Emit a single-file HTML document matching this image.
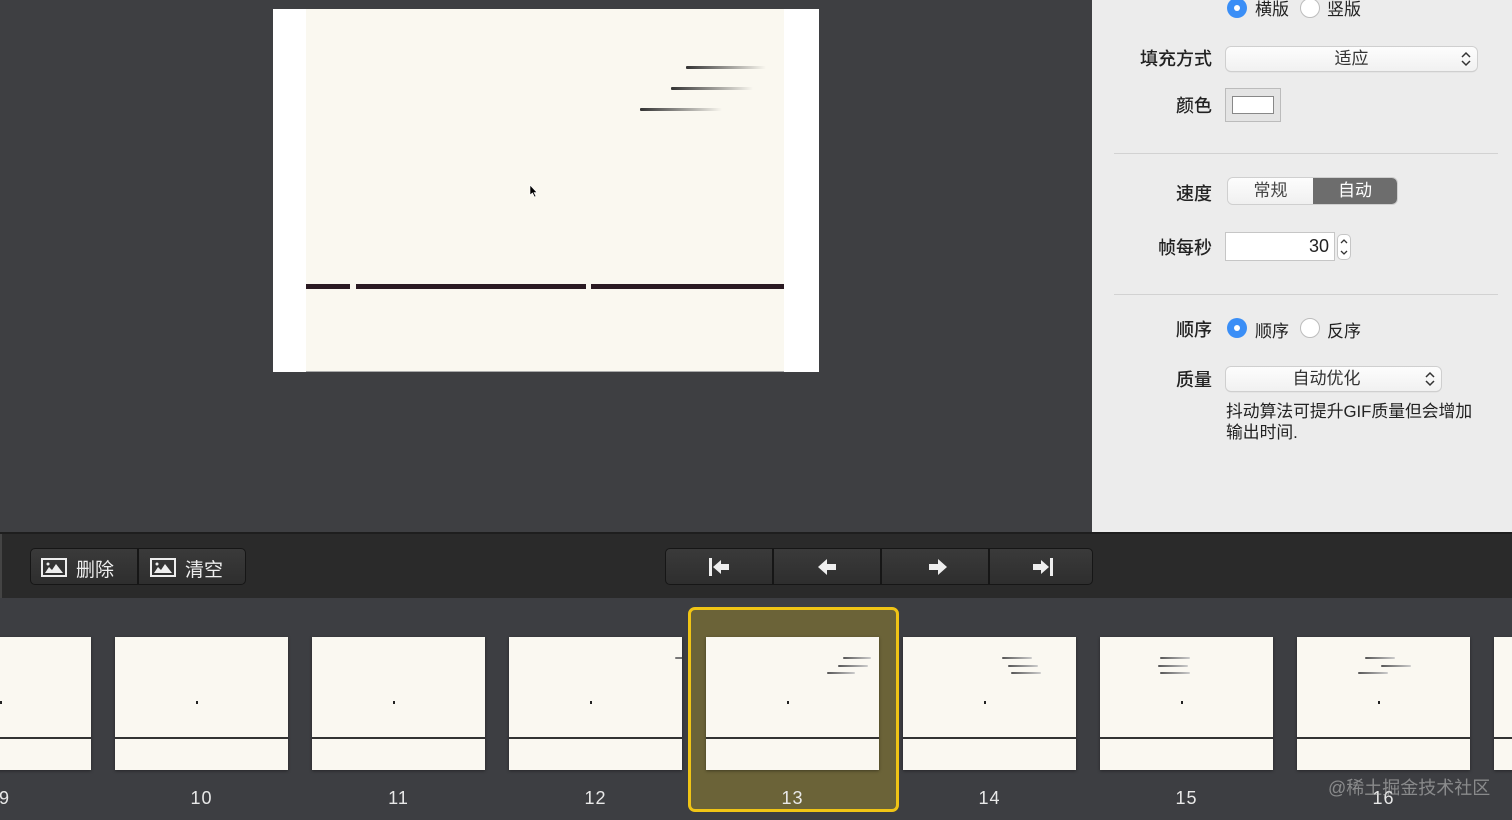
<!DOCTYPE html>
<html><head><meta charset="utf-8"><style>
*{margin:0;padding:0;box-sizing:border-box}
body{width:1512px;height:820px;overflow:hidden;background:#3e3f42;position:relative;font-family:"Liberation Sans","Noto Sans CJK SC",sans-serif}
.a{position:absolute}
.lbl{position:absolute;font-size:18px;color:#222;text-align:right;width:120px;font-weight:500}
.sp{position:absolute;height:2px;border-radius:1px}
.th{position:absolute;top:637px;width:173px;height:133px;background:#faf8f1;box-shadow:0 1px 3px rgba(0,0,0,.4);overflow:hidden}
.th .ln{position:absolute;left:0;right:0;top:100px;height:2px;background:#333}
.th .cur{position:absolute;width:2px;height:3px;background:#222}
.num{position:absolute;top:788px;width:173px;text-align:center;color:#e8e8e8;font-size:18px;letter-spacing:1px}
.btn{position:absolute;top:548px;height:37px;background:linear-gradient(#3a3a3a,#2e2e2e);border:1px solid #161616;color:#eee;font-size:19px}
.pop{position:absolute;background:linear-gradient(#fdfdfd,#f1f1f1);border-radius:5px;box-shadow:0 0 0 1px #cfcfcf,0 1px 1px #bbb;font-size:17px;color:#333;text-align:center}
.radio{position:absolute;width:20px;height:20px;border-radius:50%}
.rb{background:#3a8ef6}.rb:after{content:"";position:absolute;left:7px;top:7px;width:6px;height:6px;border-radius:50%;background:#fff}
.rw{background:#fff;border:1px solid #bdbdbd}
.rt{position:absolute;font-size:17px;color:#222}
</style></head><body>
<!-- preview -->
<div class="a" style="left:273px;top:9px;width:546px;height:363px;background:#fff"></div>
<div class="a" style="left:306px;top:9px;width:478px;height:363px;background:#faf8f0;border-bottom:1px solid #aaa"></div>
<div class="sp" style="left:686px;top:66px;width:80px;height:3px;background:linear-gradient(90deg,#333,rgba(50,50,50,0))"></div>
<div class="sp" style="left:671px;top:87px;width:82px;height:3px;background:linear-gradient(90deg,#333,rgba(50,50,50,0))"></div>
<div class="sp" style="left:640px;top:108px;width:82px;height:3px;background:linear-gradient(90deg,#333,rgba(50,50,50,0))"></div>
<div class="a" style="left:306px;top:284px;width:44px;height:5px;background:#2a1a22"></div>
<div class="a" style="left:356px;top:284px;width:230px;height:5px;background:#2a1a22"></div>
<div class="a" style="left:591px;top:284px;width:193px;height:5px;background:#2a1a22"></div>
<svg class="a" style="left:529px;top:184px" width="10" height="16"><path d="M1 1L1 11L3.5 9L5.5 13L7 12.3L5 8.5L8 8.5Z" fill="#000" stroke="#fff" stroke-width=".6"/></svg>

<!-- right panel -->
<div class="a" style="left:1092px;top:0;width:420px;height:532px;background:#ececec"></div>
<div class="radio rb" style="left:1227px;top:-2px"></div><div class="rt" style="left:1255px;top:-5px">横版</div>
<div class="radio rw" style="left:1300px;top:-2px"></div><div class="rt" style="left:1327px;top:-5px">竖版</div>
<div class="lbl" style="left:1092px;top:45px">填充方式</div>
<div class="pop" style="left:1226px;top:47px;width:251px;height:24px;line-height:24px">适应</div>
<svg class="a" style="left:1460px;top:51px" width="12" height="16"><path d="M2 6L6 2L10 6M2 10L6 14L10 10" fill="none" stroke="#333" stroke-width="1.5"/></svg>
<div class="lbl" style="left:1092px;top:92px">颜色</div>
<div class="a" style="left:1225px;top:88px;width:56px;height:34px;background:#e4e4e4;border:1px solid #bbb"></div>
<div class="a" style="left:1232px;top:96px;width:42px;height:18px;background:#fff;border:1px solid #888"></div>
<div class="a" style="left:1114px;top:153px;width:384px;height:1px;background:#d2d2d2"></div>
<div class="lbl" style="left:1092px;top:180px">速度</div>
<div class="a" style="left:1228px;top:178px;width:169px;height:26px;border-radius:5px;background:linear-gradient(#fdfdfd,#f0f0f0);box-shadow:0 0 0 1px #cfcfcf;overflow:hidden">
<div class="a" style="left:0;top:0;width:85px;height:26px;line-height:26px;text-align:center;font-size:17px;color:#444">常规</div>
<div class="a" style="left:85px;top:0;width:84px;height:26px;line-height:26px;text-align:center;font-size:17px;color:#fff;background:#6d6d6d">自动</div></div>
<div class="lbl" style="left:1092px;top:234px">帧每秒</div>
<div class="a" style="left:1225px;top:232px;width:110px;height:29px;background:#fff;border:1px solid #c6c6c6;text-align:right;padding-right:5px;font-size:18px;line-height:27px;color:#222">30</div>
<div class="a" style="left:1337px;top:234px;width:14px;height:26px;background:#fff;border:1px solid #c6c6c6;border-radius:5px"></div>
<svg class="a" style="left:1339px;top:236px" width="10" height="22"><path d="M2 7L5 4L8 7M2 15L5 18L8 15" fill="none" stroke="#333" stroke-width="1.3"/></svg>
<div class="a" style="left:1114px;top:294px;width:384px;height:1px;background:#d2d2d2"></div>
<div class="lbl" style="left:1092px;top:316px">顺序</div>
<div class="radio rb" style="left:1227px;top:318px"></div><div class="rt" style="left:1255px;top:317px">顺序</div>
<div class="radio rw" style="left:1300px;top:318px"></div><div class="rt" style="left:1327px;top:317px">反序</div>
<div class="lbl" style="left:1092px;top:366px">质量</div>
<div class="pop" style="left:1226px;top:367px;width:215px;height:24px;line-height:24px;padding-right:14px">自动优化</div>
<svg class="a" style="left:1424px;top:371px" width="12" height="16"><path d="M2 6L6 2L10 6M2 10L6 14L10 10" fill="none" stroke="#333" stroke-width="1.5"/></svg>
<div class="a" style="left:1226px;top:401px;font-size:16.8px;line-height:21px;color:#222">抖动算法可提升GIF质量但会增加<br>输出时间.</div>

<!-- toolbar -->
<div class="a" style="left:0;top:532px;width:1512px;height:66px;background:#2a2a2a;border-top:2px solid #1e1e1e"></div>
<div class="a" style="left:0;top:534px;width:2px;height:64px;background:#444"></div>
<div class="btn" style="left:30px;width:108px;border-radius:5px 0 0 5px"><svg class="a" style="left:10px;top:9px" width="26" height="19"><rect x="1" y="1" width="24" height="17" fill="none" stroke="#eee" stroke-width="2"/><path d="M4 15L8 9L11 12L15 6L22 15Z" fill="#eee"/><circle cx="7" cy="6" r="1.5" fill="#eee"/></svg><span class="a" style="left:45px;top:6px">删除</span></div>
<div class="btn" style="left:138px;width:108px;border-radius:0 5px 5px 0"><svg class="a" style="left:11px;top:9px" width="26" height="19"><rect x="1" y="1" width="24" height="17" fill="none" stroke="#eee" stroke-width="2"/><path d="M4 15L8 9L11 12L15 6L22 15Z" fill="#eee"/><circle cx="7" cy="6" r="1.5" fill="#eee"/></svg><span class="a" style="left:46px;top:6px">清空</span></div>
<div class="btn" style="left:665px;width:108px;border-radius:5px 0 0 5px"><svg class="a" style="left:41px;top:7px" width="26" height="22"><rect x="2" y="2" width="3" height="18" fill="#eee"/><path d="M6 11L14 4L14 8L22 8L22 14L14 14L14 18Z" fill="#eee"/></svg></div>
<div class="btn" style="left:773px;width:108px"><svg class="a" style="left:41px;top:7px" width="26" height="22"><path d="M3 11L12 3L12 8L21 8L21 14L12 14L12 19Z" fill="#eee"/></svg></div>
<div class="btn" style="left:881px;width:108px"><svg class="a" style="left:42px;top:7px" width="26" height="22"><path d="M23 11L14 3L14 8L5 8L5 14L14 14L14 19Z" fill="#eee"/></svg></div>
<div class="btn" style="left:989px;width:104px;border-radius:0 5px 5px 0"><svg class="a" style="left:39px;top:7px" width="26" height="22"><rect x="21" y="2" width="3" height="18" fill="#eee"/><path d="M20 11L12 4L12 8L4 8L4 14L12 14L12 18Z" fill="#eee"/></svg></div>

<!-- filmstrip -->
<div class="a" style="left:0;top:598px;width:1512px;height:222px;background:#3d3e42"></div>
<div class="a" style="left:688px;top:607px;width:211px;height:205px;border:3px solid #f0c415;border-radius:7px;background:#6b6338"></div>

<div class="th" style="left:-82px"><div class="ln"></div><div class="cur" style="left:82px;top:64px"></div></div>
<div class="th" style="left:115px"><div class="ln"></div><div class="cur" style="left:81px;top:64px"></div></div>
<div class="th" style="left:312px"><div class="ln"></div><div class="cur" style="left:81px;top:64px"></div></div>
<div class="th" style="left:509px"><div class="ln"></div><div class="cur" style="left:81px;top:64px"></div><div class="sp" style="left:166px;top:20px;width:10px;background:#777"></div></div>
<div class="th" style="left:706px"><div class="ln"></div><div class="cur" style="left:81px;top:64px"></div><div class="sp" style="left:137px;top:20px;width:28px;background:linear-gradient(90deg,#555,#ccc)"></div><div class="sp" style="left:132px;top:28px;width:30px;background:linear-gradient(90deg,#555,#ccc)"></div><div class="sp" style="left:121px;top:35px;width:28px;background:linear-gradient(90deg,#555,#ccc)"></div></div>
<div class="th" style="left:903px"><div class="ln"></div><div class="cur" style="left:81px;top:64px"></div><div class="sp" style="left:99px;top:20px;width:30px;background:linear-gradient(90deg,#555,#ccc)"></div><div class="sp" style="left:105px;top:28px;width:30px;background:linear-gradient(90deg,#555,#ccc)"></div><div class="sp" style="left:108px;top:35px;width:30px;background:linear-gradient(90deg,#555,#ccc)"></div></div>
<div class="th" style="left:1100px"><div class="ln"></div><div class="cur" style="left:81px;top:64px"></div><div class="sp" style="left:60px;top:20px;width:30px;background:linear-gradient(90deg,#555,#ccc)"></div><div class="sp" style="left:58px;top:28px;width:30px;background:linear-gradient(90deg,#555,#ccc)"></div><div class="sp" style="left:60px;top:35px;width:30px;background:linear-gradient(90deg,#555,#ccc)"></div></div>
<div class="th" style="left:1297px"><div class="ln"></div><div class="cur" style="left:81px;top:64px"></div><div class="sp" style="left:68px;top:20px;width:30px;background:linear-gradient(90deg,#555,#ccc)"></div><div class="sp" style="left:84px;top:28px;width:30px;background:linear-gradient(90deg,#555,#ccc)"></div><div class="sp" style="left:61px;top:35px;width:30px;background:linear-gradient(90deg,#555,#ccc)"></div></div>
<div class="th" style="left:1494px"><div class="ln"></div></div>

<div class="num" style="left:-82px">9</div>
<div class="num" style="left:115px">10</div>
<div class="num" style="left:312px">11</div>
<div class="num" style="left:509px">12</div>
<div class="num" style="left:706px">13</div>
<div class="num" style="left:903px">14</div>
<div class="num" style="left:1100px">15</div>
<div class="num" style="left:1297px">16</div>
<div class="a" style="left:1328px;top:774px;font-size:18px;color:rgba(200,200,200,.55)">@稀土掘金技术社区</div>
</body></html>
